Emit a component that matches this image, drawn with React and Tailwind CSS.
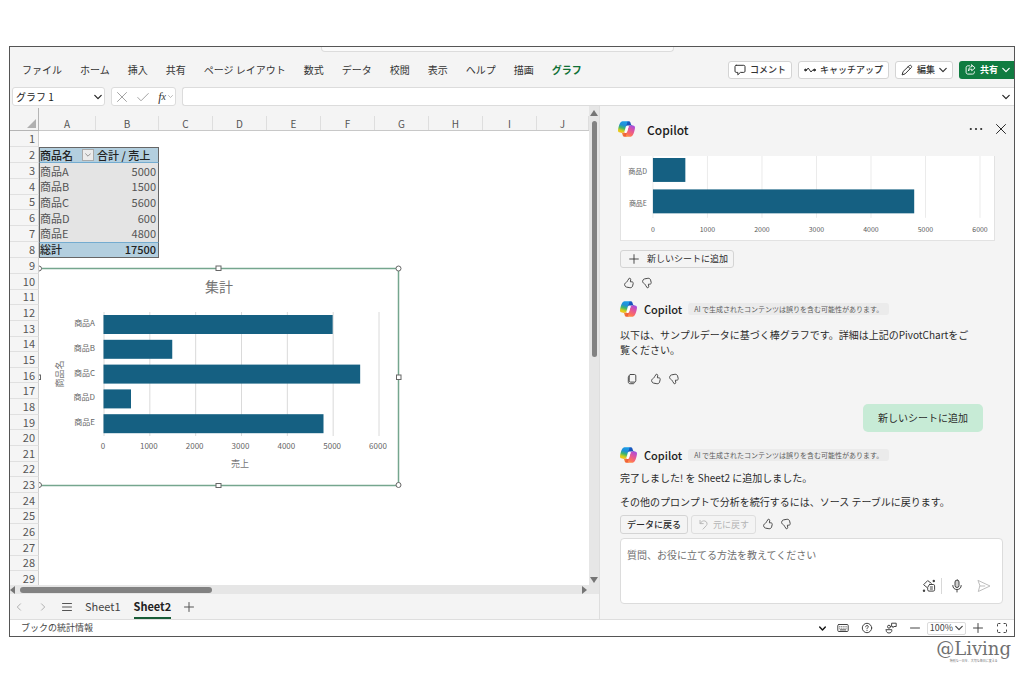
import React from "react";

const TABS = ["ファイル", "ホーム", "挿入", "共有", "ページ レイアウト", "数式", "データ", "校閲", "表示", "ヘルプ", "描画", "グラフ"];
const COLS = ["A", "B", "C", "D", "E", "F", "G", "H", "I", "J"];
const CELLS = {
  3: ["商品A", 5000],
  4: ["商品B", 1500],
  5: ["商品C", 5600],
  6: ["商品D", 600],
  7: ["商品E", 4800],
};
const TICKS = [0, 1000, 2000, 3000, 4000, 5000, 6000];

function CopilotLogo({ id, className }) {
  return (
    <svg viewBox="0 0 24 22" className={className} aria-hidden="true">
      <defs>
        <linearGradient id={id + "a"} x1="0.6" y1="0" x2="0.3" y2="1">
          <stop offset="0" stopColor="#1b9de8" />
          <stop offset="0.35" stopColor="#1f8fd6" />
          <stop offset="0.6" stopColor="#3fb56b" />
          <stop offset="0.85" stopColor="#d6cf1c" />
          <stop offset="1" stopColor="#f3c51a" />
        </linearGradient>
        <linearGradient id={id + "b"} x1="0.8" y1="0" x2="0.3" y2="1">
          <stop offset="0" stopColor="#a64be0" />
          <stop offset="0.4" stopColor="#e0559c" />
          <stop offset="0.75" stopColor="#fb6d63" />
          <stop offset="1" stopColor="#fd9140" />
        </linearGradient>
        <linearGradient id={id + "c"} x1="0" y1="0" x2="1" y2="1">
          <stop offset="0" stopColor="#1565c8" />
          <stop offset="1" stopColor="#1a3fae" />
        </linearGradient>
        <linearGradient id={id + "d"} x1="0" y1="0" x2="1" y2="0.6">
          <stop offset="0" stopColor="#f5b82a" />
          <stop offset="1" stopColor="#ee4b3c" />
        </linearGradient>
      </defs>
      <path fill={`url(#${id}c)`} d="M17.533 1.829A2.528 2.528 0 0 0 15.11 0h-.737a2.531 2.531 0 0 0-2.484 2.087l-1.263 6.937.314-1.08a2.528 2.528 0 0 1 2.424-1.833h4.284l1.797.706 1.731-.706h-.505a2.528 2.528 0 0 1-2.423-1.829l-.715-2.453z" />
      <path fill={`url(#${id}d)`} d="M6.726 20.16A2.528 2.528 0 0 0 9.152 22h1.566c1.37 0 2.49-1.1 2.525-2.48l.17-6.69-.357 1.228a2.528 2.528 0 0 1-2.423 1.83h-4.32l-1.54-.842-1.667.843h.497c1.124 0 2.113.75 2.426 1.84l.697 2.432z" />
      <path fill={`url(#${id}a)`} d="M15 0H6.252c-2.5 0-4 3.331-5 6.662-1.184 3.947-2.734 9.225 1.75 9.225H6.78c1.13 0 2.12-.753 2.43-1.847.657-2.317 1.809-6.359 2.713-9.436.46-1.563.842-2.906 1.43-3.742A1.97 1.97 0 0 1 15 0" />
      <path fill={`url(#${id}b)`} d="M9 22h8.749c2.5 0 4-3.332 5-6.663 1.184-3.948 2.734-9.227-1.75-9.227H17.22c-1.129 0-2.12.754-2.43 1.848a1149.2 1149.2 0 0 1-2.713 9.437c-.46 1.564-.842 2.907-1.43 3.743A1.97 1.97 0 0 1 9 22" />
      <path fill="#fff" d="M12.600 7.500h3.200c-.6.400-1 1-1.200 1.800l-1.900 6.200c-.3.700-.8 1.100-1.500 1.100H8.900c.6-.4 1-1 1.200-1.700l1.700-6z" />
    </svg>
  );
}

function Icon({ box = 12, className = "size-3", sw = 1, children }) {
  return (
    <svg viewBox={`0 0 ${box} ${box}`} className={"shrink-0 " + className} fill="none" stroke="currentColor" strokeWidth={sw} strokeLinecap="round" strokeLinejoin="round" aria-hidden="true">
      {children}
    </svg>
  );
}

function Chevron({ className = "size-2", sw = 1.2 }) {
  return (
    <Icon box={8} className={className} sw={sw}>
      <path d="M0.8 2.4L4 5.6l3.2-3.2" />
    </Icon>
  );
}

function ThumbUp() {
  return (
    <Icon>
      <path d="M6.700 1.200c.8.100 1.100.7 1 1.400l-.3 2.200h1.400c1 0 1.600.8 1.400 1.700l-.6 2.400c-.3 1.300-1.400 2-2.700 1.800l-3.400-.6c-.7-.1-1.100-.5-1.400-1.100l-.4-.9c-.3-.8 0-1.500.6-2l1.300-1c.5-.4.7-.7.900-1.200z" />
    </Icon>
  );
}

function ThumbDown() {
  return (
    <Icon>
      <path d="M6.700 10.800c.8-.1 1.100-.7 1-1.400l-.3-2.200h1.400c1 0 1.600-.8 1.400-1.700l-.6-2.400c-.3-1.300-1.400-2-2.700-1.800l-3.400.6c-.7.100-1.100.5-1.400 1.100l-.4.9c-.3.800 0 1.500.6 2l1.300 1c.5.400.7.700.9 1.200z" />
    </Icon>
  );
}

function Feedback() {
  return (
    <div className="flex gap-[6px] text-[#4a4a4a]">
      <button aria-label="高く評価"><ThumbUp /></button>
      <button aria-label="低く評価"><ThumbDown /></button>
    </div>
  );
}

function Ribbon() {
  const btn = "flex h-[18px] items-center gap-1 rounded-[3px] border border-[#d4d4d4] bg-white px-[5px] text-[9px] font-medium text-[#333]";
  return (
    <header>
      <div className="flex justify-center">
        <div className="mr-[30px] h-[5px] w-[353px] rounded-b-[4px] border border-t-0 border-[#dcdcdc] bg-[#fafafa]" />
      </div>
      <div className="flex h-[35px] items-center justify-between pl-3">
        <nav className="flex gap-[18px] text-[10px] leading-4 text-[#333]">
          {TABS.map((t) => (
            <button key={t} className={"whitespace-nowrap " + (t === "グラフ" ? "font-bold text-[#0f7034]" : "")}>{t}</button>
          ))}
        </nav>
        <div className="flex shrink-0 gap-[6px]">
          <button className={btn}>
            <Icon><path d="M2.200 1.300h7.600c.7 0 1.200.5 1.200 1.200v4.700c0 .7-.5 1.200-1.200 1.200H6.400L3.800 10.800V8.400H2.200C1.500 8.400 1 7.900 1 7.200V2.500c0-.7.5-1.200 1.200-1.200z" /></Icon>
            コメント
          </button>
          <button className={btn}>
            <Icon><circle cx="1.500" cy="6" r=".9" fill="currentColor" /><circle cx="10.500" cy="6" r=".9" fill="currentColor" /><path d="M1.500 6h1.200l1.500-2 2.800 4 1.700-2h1.800" /></Icon>
            キャッチアップ
          </button>
          <button className={btn}>
            <Icon><path d="M8.200 1.700c.6-.6 1.500-.6 2 0s.6 1.400 0 2L4 9.900l-2.900 1 .9-3zM7.200 2.700l2 2" /></Icon>
            編集
            <Chevron />
          </button>
          <button className="flex h-[18px] items-center gap-1 rounded-l-[3px] bg-[#107c41] pr-1 pl-[6px] text-[9px] font-bold text-white">
            <Icon className="size-[11px]"><path d="M5 2H3.200C2 2 1.200 2.800 1.200 4v5c0 1.200.8 2 2 2h5c1.200 0 2-.8 2-2V8.500M7.300 1l3.700 3.200-3.700 3.200V5.600C5.700 5.500 4.600 6.200 3.700 7.600 3.900 5 5 3 7.300 2.800z" /></Icon>
            共有
            <Chevron />
          </button>
        </div>
      </div>
    </header>
  );
}

function FormulaBar() {
  return (
    <div className="flex h-[19px] gap-[6px] pl-[2px]">
      <button aria-label="名前ボックス" className="flex w-[93px] shrink-0 items-center justify-between rounded-[3px] border border-[#dcdcdc] bg-white pr-[2px] pl-[3px] text-[10px] leading-4 text-[#222]">
        グラフ 1
        <Chevron />
      </button>
      <div className="flex w-[65px] shrink-0 items-center justify-between rounded-[3px] border border-[#dcdcdc] bg-white pr-[2px] pl-1 text-[#a3a3a3]">
        <button aria-label="キャンセル"><Icon><path d="M1.500 1.500l9 9M10.500 1.500l-9 9" /></Icon></button>
        <button aria-label="入力"><Icon><path d="M.8 6.500l3.200 3.300L11.300 2.500" /></Icon></button>
        <button aria-label="関数の挿入" className="flex items-center font-['Liberation_Serif',serif] text-[12px] leading-3 text-[#333] italic">
          f<span className="text-[10px]">x</span>
          <span className="ml-[2px] text-[#a3a3a3]"><Chevron className="size-[5px]" /></span>
        </button>
      </div>
      <div className="flex min-w-0 flex-1 items-center rounded-l-[3px] border border-r-0 border-[#dcdcdc] bg-white pr-1 text-[#222]">
        <input aria-label="数式バー" className="min-w-0 flex-1 bg-transparent text-[10px] outline-none" />
        <button aria-label="数式バーの展開"><Chevron /></button>
      </div>
    </div>
  );
}

function PivotCells({ row }) {
  if (row === 2) {
    return (
      <>
        <td className="border-t border-b border-l border-t-[#666] border-b-[#74acd0] border-l-[#666] bg-[#b3cfdf] p-0">
          <div className="flex items-center justify-between pr-[2px] font-medium text-[#222]">
            商品名
            <button aria-label="フィルター" className="flex size-3 items-center justify-center border border-[#a9a9a9] bg-[#ececec] text-[#777]"><Chevron className="size-[6px]" sw={1} /></button>
          </div>
        </td>
        <td className="border-t border-r border-b border-t-[#666] border-r-[#666] border-b-[#74acd0] bg-[#b3cfdf] p-0 pl-px text-left font-medium whitespace-nowrap text-[#222]">合計 / 売上</td>
      </>
    );
  }
  if (row === 8) {
    return (
      <>
        <td className="border-t border-b border-l border-t-[#74acd0] border-b-[#666] border-l-[#666] bg-[#b3cfdf] p-0 font-medium text-[#222]">総計</td>
        <td className="border-t border-r border-b border-t-[#74acd0] border-r-[#666] border-b-[#666] bg-[#b3cfdf] p-0 pr-[2px] text-right font-medium text-[#222]">17500</td>
      </>
    );
  }
  return (
    <>
      <td className="border-l border-[#666] bg-[#e4e4e4] p-0">{CELLS[row][0]}</td>
      <td className="border-r border-[#666] bg-[#e4e4e4] p-0 pr-[2px] text-right">{CELLS[row][1]}</td>
    </>
  );
}

function SheetChart() {
  const x = (v) => 65 + (v * 275) / 6000;
  const data = Object.values(CELLS);
  return (
    <svg viewBox="0 0 364 224" className="absolute top-[156px] left-[29px] h-[224px] w-[364px] bg-transparent font-['Noto_Sans_CJK_JP',sans-serif] text-[8px]" role="img" aria-label="集計">
      <rect x="-2" y="4.500" width="361.500" height="217" fill="#fff" stroke="#75a68e" strokeWidth="1.500" />
      <text x="180" y="28" textAnchor="middle" className="fill-[#757575] text-[14px]">集計</text>
      {TICKS.map((t) => (
        <g key={t}>
          <line x1={x(t)} x2={x(t)} y1="48" y2="172" stroke="#dadada" />
          <text x={x(t) - 1} y="185" textAnchor="middle" className="fill-[#666]">{t}</text>
        </g>
      ))}
      {data.map(([name, v], i) => (
        <g key={name}>
          <rect x="64.500" y={51 + i * 24.800} width={x(v) - 65} height="19" fill="#156082" />
          <text x="56" y={62 + i * 24.800} textAnchor="end" className="fill-[#666]">{name}</text>
        </g>
      ))}
      <text x="201" y="203" textAnchor="middle" className="fill-[#757575] text-[9px]">売上</text>
      <text transform="translate(24 110) rotate(-90)" textAnchor="middle" className="fill-[#757575] text-[9px]">商品名</text>
      <g fill="#fff" stroke="#666">
        <rect x="177" y="2" width="5" height="4.500" />
        <rect x="177" y="219.500" width="5" height="4" />
        <rect x="357.500" y="111" width="4.500" height="4.500" />
        <rect x="-2.500" y="111" width="4" height="4.500" />
        <circle cx="359.500" cy="4.500" r="2.500" />
        <circle cx="359.500" cy="221" r="2.500" />
        <circle cx="0" cy="4.500" r="2.500" />
        <circle cx="0" cy="221" r="2.500" />
      </g>
    </svg>
  );
}

function Sheet() {
  return (
    <div className="relative h-[477px] overflow-hidden bg-white">
      <table className="h-[479px] w-full table-fixed border-separate border-spacing-0 text-[11px] leading-[13px] text-[#555]">
        <colgroup>
          <col className="w-[29px]" />
          <col className="w-[57px]" />
          <col className="w-[63px]" />
          {COLS.slice(2, 9).map((c) => <col key={c} className="w-[54px]" />)}
          <col />
        </colgroup>
        <thead>
          <tr className="h-[23px] bg-[#f4f4f4] text-[10px]">
            <th className="border-r border-b border-[#b5b5b5] p-0 align-bottom">
              <svg viewBox="0 0 9 9" className="mr-[2px] mb-[2px] ml-auto size-[9px]" aria-hidden="true"><path d="M9 0v9H0z" fill="#b0b0b0" /></svg>
            </th>
            {COLS.map((c) => (
              <th key={c} scope="col" className="border-b border-[#c8c8c8] p-0 align-bottom font-normal">
                <div className="mt-2 flex h-[14px] items-center justify-center border-r border-[#dedede]">{c}</div>
              </th>
            ))}
          </tr>
        </thead>
        <tbody>
          {Array.from({ length: 29 }, (_, i) => i + 1).map((r) => (
            <tr key={r}>
              <th scope="row" className="border-r border-b border-r-[#cfcfcf] border-b-[#e0e0e0] bg-[#f5f5f5] p-0 pr-[3px] text-right font-normal">{r}</th>
              {r >= 2 && r <= 8 ? <PivotCells row={r} /> : <td colSpan={2} className="p-0" />}
              <td colSpan={8} className="p-0" />
            </tr>
          ))}
        </tbody>
      </table>
      <SheetChart />
    </div>
  );
}

function SheetArea() {
  return (
    <div className="flex w-[590px] shrink-0 flex-col border-r border-[#dedede]">
      <div className="flex">
        <div className="min-w-0 flex-1 pt-[2px]"><Sheet /></div>
        <div className="flex w-[10px] shrink-0 flex-col items-center bg-[#e6e6e6] text-[#757575]">
          <svg viewBox="0 0 8 6" className="mt-1 h-[6px] w-2" aria-hidden="true"><path d="M4 0l4 6H0z" fill="currentColor" /></svg>
          <div className="mt-[5px] h-[236px] w-[5px] rounded-full bg-[#828282]" />
          <svg viewBox="0 0 8 6" className="mt-auto mb-[2px] h-[6px] w-2" aria-hidden="true"><path d="M4 6l4-6H0z" fill="currentColor" /></svg>
        </div>
      </div>
      <div className="flex h-[9px] items-center bg-[#e6e6e6] pr-[12px] text-[#757575]">
        <svg viewBox="0 0 5 8" className="h-2 w-[5px]" aria-hidden="true"><path d="M0 4l5-4v8z" fill="currentColor" /></svg>
        <div className="ml-[5px] h-[6px] w-[192px] rounded-full bg-[#828282]" />
        <svg viewBox="0 0 5 8" className="ml-auto h-2 w-[5px]" aria-hidden="true"><path d="M5 4L0 0v8z" fill="currentColor" /></svg>
      </div>
      <div className="flex h-[25px] items-center pl-[5px] text-[11px] leading-4 text-[#444]">
        <button aria-label="前のシート" className="text-[#b0b0b0]"><Icon box={8} className="size-2"><path d="M5.500 .8L2.300 4l3.200 3.200" /></Icon></button>
        <button aria-label="次のシート" className="ml-4 text-[#b0b0b0]"><Icon box={8} className="size-2"><path d="M2.500 .8L5.700 4 2.500 7.200" /></Icon></button>
        <button aria-label="すべてのシート" className="ml-[14px] text-[#555]"><Icon><path d="M1.500 2.500h9M1.500 6h9M1.500 9.500h9" /></Icon></button>
        <button className="ml-3 h-full pb-px">Sheet1</button>
        <button className="ml-[13px] h-full border-b-2 border-b-[#185c37] pt-px font-bold text-[#222]">Sheet2</button>
        <button aria-label="新しいシート" className="ml-3 text-[#555]"><Icon><path d="M6 1.500v9M1.500 6h9" /></Icon></button>
      </div>
    </div>
  );
}

function PanelChart() {
  const x = (v) => 32 + (v * 328) / 6000;
  return (
    <svg viewBox="0 0 374 84" className="block w-full border border-t-0 border-[#e2e2e2] bg-white font-['Noto_Sans_CJK_JP',sans-serif] text-[7px]" role="img" aria-label="売上グラフ">
      {TICKS.map((t) => (
        <g key={t}>
          <line x1={x(t)} x2={x(t)} y1="0" y2="62" stroke="#ebebeb" />
          <text x={x(t)} y="76" textAnchor="middle" className="fill-[#595959]">{t}</text>
        </g>
      ))}
      <rect x="32" y="2" width="32.500" height="24" fill="#156082" />
      <rect x="32" y="33.500" width="262" height="24" fill="#156082" />
      <text x="26" y="18" textAnchor="end" className="fill-[#666]">商品D</text>
      <text x="26" y="50" textAnchor="end" className="fill-[#666]">商品E</text>
    </svg>
  );
}

function Byline({ id }) {
  return (
    <div className="flex items-center">
      <CopilotLogo id={id} className="h-4 w-[17px]" />
      <span className="ml-[7px] text-[11px] leading-4 font-medium text-[#1c1c1c]">Copilot</span>
      <span className="ml-[6px] rounded-[3px] bg-[#ebebeb] px-[6px] text-[7px] leading-3 whitespace-nowrap text-[#5c5c5c]">AI で生成されたコンテンツは誤りを含む可能性があります。</span>
    </div>
  );
}

function CopilotPanel() {
  return (
    <aside className="flex min-w-0 flex-1 flex-col px-5 pr-[11px] text-[10px] leading-[15px] text-[#2b2b2b]">
      <div className="-mr-1 -ml-[2px] flex h-[50px] items-center pb-1">
        <CopilotLogo id="head" className="h-[16px] w-[17px]" />
        <h2 className="ml-3 text-[12px] font-medium text-[#1a1a1a]">Copilot</h2>
        <button aria-label="その他" className="ml-auto"><Icon box={14} className="size-[14px]"><g fill="currentColor" stroke="none"><circle cx="1.800" cy="7" r="1.100" /><circle cx="7" cy="7" r="1.100" /><circle cx="12.200" cy="7" r="1.100" /></g></Icon></button>
        <button aria-label="閉じる" className="ml-[12px]"><Icon className="size-3"><path d="M1.500 1.500l9 9M10.500 1.500l-9 9" /></Icon></button>
      </div>
      <div className="pr-2"><PanelChart /></div>
      <button className="mt-[9px] flex h-[18px] items-center gap-2 self-start rounded-[3px] border border-[#d4d4d4] pr-[5px] pl-2 text-[9px]">
        <Icon className="size-[10px]"><path d="M6 .8v10.400M.8 6h10.400" /></Icon>
        新しいシートに追加
      </button>
      <div className="mt-[9px] pl-[3px]"><Feedback /></div>
      <div className="mt-3"><Byline id="one" /></div>
      <p className="mt-[10px]">以下は、サンプルデータに基づく棒グラフです。詳細は上記のPivotChartをご<br />覧ください。</p>
      <div className="mt-4 flex items-center gap-[12px] pl-[6px]">
        <button aria-label="コピー" className="text-[#4a4a4a]"><Icon><path d="M4.500 1.500h4c.8 0 1.300.5 1.300 1.300v5c0 .8-.5 1.300-1.300 1.300h-4c-.8 0-1.300-.5-1.300-1.300v-5c0-.8.5-1.300 1.300-1.300zM3.200 3c-.6.200-.9.600-.9 1.200v4.600c0 1.200.7 1.900 1.900 1.900h3c.6 0 1-.3 1.200-.9" /></Icon></button>
        <Feedback />
      </div>
      <div className="mt-[19px] mr-5 self-end rounded-[5px] bg-[#c7ebd6] px-[15px] py-[6px] leading-4">新しいシートに追加</div>
      <div className="mt-[15px]"><Byline id="two" /></div>
      <p className="mt-[7px]">完了しました! を Sheet2 に追加しました。</p>
      <p className="mt-[9px]">その他のプロンプトで分析を続行するには、ソース テーブルに戻ります。</p>
      <div className="mt-[6px] flex items-center text-[9px]">
        <button className="h-[19px] rounded-[3px] border border-[#d4d4d4] px-[6px] font-medium">データに戻る</button>
        <button disabled className="ml-[3px] flex h-[19px] items-center gap-1 rounded-[3px] border border-[#dedede] px-[6px] text-[#b5b5b5]">
          <Icon className="size-[11px]"><path d="M2.200 1.500v3.500h3.500M2.400 4.800C3.600 2.600 5.600 1.600 7.600 2.200c2.300.7 3 3.300 1.500 5L5.500 11" /></Icon>
          元に戻す
        </button>
        <div className="ml-[6px]"><Feedback /></div>
      </div>
      <div className="mt-1 flex h-[66px] flex-col rounded-[4px] border border-[#dcdcdc] bg-white pt-2 pr-[11px] pb-[9px] pl-[6px]">
        <textarea aria-label="Copilot へのメッセージ" placeholder="質問、お役に立てる方法を教えてください" className="min-h-0 w-full flex-1 resize-none overflow-hidden bg-transparent outline-none placeholder:text-[#707070]" />
        <div className="flex items-center justify-end text-[#444]">
          <button aria-label="プロンプトを表示">
            <Icon box={14} className="size-[14px]"><path d="M4.800 8.300L1.600 5.700 5.700 1.600 9.300 4.300M7.500 5.500h3.800c.8 0 1.300.5 1.300 1.300v4c0 .8-.5 1.300-1.300 1.300H7c-.8 0-1.300-.5-1.300-1.300V8.300L7.500 5.500zM8.300 8h2.200M8.300 10h2.200" /><g fill="currentColor" stroke="none"><circle cx="11.800" cy="2" r="1.200" /><circle cx="2" cy="11.800" r="1.200" /></g></Icon>
          </button>
          <span className="ml-[5px] h-4 w-px bg-[#d8d8d8]" />
          <button aria-label="音声入力" className="ml-2"><Icon box={14} className="size-[14px]"><rect x="5" y="1" width="4" height="7.500" rx="2" fill="#cfcfcf" /><path d="M2.800 6.500c0 2.500 1.600 4 4.200 4s4.200-1.500 4.200-4M7 10.500V13" /></Icon></button>
          <button aria-label="送信" disabled className="ml-[13px] text-[#bdbdbd]"><Icon box={14} className="size-[14px]"><path d="M1.300 1.500L13 7 1.300 12.500l1.500-5.500zM2.800 7h5" /></Icon></button>
        </div>
      </div>
    </aside>
  );
}

function StatusBar() {
  return (
    <footer className="flex h-[17px] items-center justify-between border-t border-[#dedede] bg-white pr-[6px] pl-[11px] text-[9px] leading-3 text-[#444]">
      <button>ブックの統計情報</button>
      <div className="flex items-center">
        <button aria-label="表示オプション" className="text-[#111]"><Chevron className="size-[7px]" sw={1.600} /></button>
        <button aria-label="キーボード" className="ml-[11px]"><Icon><rect x=".8" y="2.500" width="10.400" height="7" rx="1" /><path d="M2.800 4.600h.1M4.800 4.600h.1M6.900 4.600h.1M9 4.600h.1M2.800 6.200h.1M4.800 6.200h.1M6.900 6.200h.1M9 6.200h.1M3.200 7.900h5.600" /></Icon></button>
        <button aria-label="ヘルプ" className="ml-3"><Icon><circle cx="6" cy="6" r="4.700" /><path d="M4.700 4.800C4.700 4 5.200 3.500 6 3.500s1.300.5 1.300 1.200C7.300 5.600 6 5.700 6 6.800M6 8.400v.1" /></Icon></button>
        <button aria-label="フィードバック" className="ml-3"><Icon><circle cx="4" cy="4.700" r="1.500" /><path d="M1.200 7.700h5.600v1c0 1.400-1.200 2.300-2.800 2.300s-2.800-.9-2.800-2.300zM7 1.200h4.200v3.300H9L7.800 5.600V4.500H7z" /></Icon></button>
        <button aria-label="縮小" className="ml-3"><Icon><path d="M1.500 6h9" /></Icon></button>
        <button aria-label="ズーム" className="ml-[6px] flex h-[13px] items-center gap-[2px] rounded-[2px] border border-[#dcdcdc] px-[2px]">100%<Chevron /></button>
        <button aria-label="拡大" className="ml-[6px]"><Icon><path d="M6 1.500v9M1.500 6h9" /></Icon></button>
        <button aria-label="全画面" className="ml-3"><Icon><path d="M1.500 4V2.500c0-.6.400-1 1-1H4M8 1.500h1.500c.6 0 1 .4 1 1V4M10.500 8v1.500c0 .6-.4 1-1 1H8M4 10.500H2.500c-.6 0-1-.4-1-1V8" /></Icon></button>
      </div>
    </footer>
  );
}

export default function App() {
  return (
    <div className="min-h-screen bg-white px-[9px] pt-[46px] font-['Noto_Sans_CJK_JP','Noto_Sans',sans-serif]">
      <main className="overflow-hidden border border-[#555] bg-[#f4f4f4]">
        <Ribbon />
        <FormulaBar />
        <div className="flex">
          <SheetArea />
          <CopilotPanel />
        </div>
        <StatusBar />
      </main>
      <div className="flex justify-end pt-px pr-1">
        <div className="flex flex-col items-center text-[#707070]">
          <div className="font-['DejaVu_Serif',serif] text-[18px] leading-[21px]">@Living</div>
          <div className="text-[3px] leading-1 whitespace-nowrap">特別な一日を、大切な毎日に変える</div>
        </div>
      </div>
    </div>
  );
}
